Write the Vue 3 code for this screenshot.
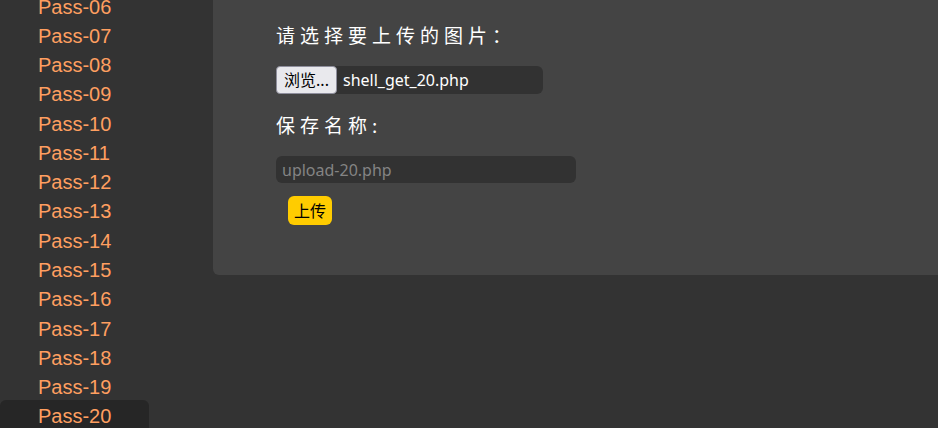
<script setup>
import { ref } from 'vue'

const passes = Array.from({ length: 15 }, (_, i) => 'Pass-' + String(i + 6).padStart(2, '0'))
const current = ref('Pass-20')
const picker = ref(null)
const fileName = ref('shell_get_20.php')
const saveName = ref('')

function onPick(event) {
  const file = event.target.files[0]
  if (file) fileName.value = file.name
}
</script>

<template>
  <div class="page">
    <nav class="menu">
      <a
        v-for="name in passes"
        :key="name"
        :href="'#' + name"
        class="menu-item"
        :class="{ active: name === current }"
        @click="current = name"
      >{{ name }}</a>
    </nav>
    <main class="panel">
      <form class="form" @submit.prevent>
        <label class="caption" for="upload-file">请选择要上传的图片：</label>
        <div class="file-box">
          <button type="button" class="browse" @click="picker.click()">浏览...</button>
          <span class="file-name">{{ fileName }}</span>
          <input id="upload-file" ref="picker" type="file" hidden @change="onPick">
        </div>
        <label class="caption" for="save-name">保存名称:</label>
        <input id="save-name" v-model="saveName" class="text-box" type="text" placeholder="upload-20.php">
        <button type="submit" class="submit">上传</button>
      </form>
    </main>
  </div>
</template>

<style>
body {
  background: #333;
}
</style>

<style scoped>
.page {
  display: flex;
  align-items: flex-start;
  gap: 64px;
  height: 100vh;
  overflow: hidden;
  background: #333;
}
.menu {
  display: grid;
  grid-auto-rows: 1fr;
  flex: none;
  width: 149px;
  min-height: calc(100vh + 11px);
  margin-top: -10px;
}
.menu-item {
  display: flex;
  align-items: center;
  padding: 4px 0 0 38px;
  color: #ff9f60;
  font: 20px/24px "Liberation Sans", Arial, sans-serif;
  text-decoration: none;
}
.menu-item.active {
  border-radius: 6px 6px 0 0;
  background: #262626;
}
.panel {
  flex: 1;
  min-width: 0;
  padding: 20px 63px 50px;
  border-radius: 0 0 0 6px;
  background: #444;
}
.form {
  display: flex;
  flex-direction: column;
  align-items: flex-start;
  font: 16px/24px "Noto Sans", "Noto Sans CJK SC", sans-serif;
}
.caption {
  color: #fff;
  font-family: "Noto Sans CJK SC", sans-serif;
  font-size: 19px;
  line-height: 30px;
  letter-spacing: 5px;
}
.file-box {
  display: flex;
  align-items: center;
  gap: 6px;
  width: 267px;
  height: 28px;
  margin: 16px 0;
  border-radius: 6px;
  background: #323232;
  color: #fff;
}
.browse {
  box-sizing: border-box;
  min-width: 61px;
  height: 28px;
  padding: 0 6px;
  border: 1px solid #8f8f9d;
  border-radius: 4px;
  background: #e9e9ed;
  color: #000;
  font: inherit;
}
.text-box {
  box-sizing: border-box;
  width: 300px;
  max-width: 100%;
  height: 27px;
  margin: 16px 0 13px;
  padding: 0 6px;
  border: 0;
  border-radius: 6px;
  background: #323232;
  color: #fff;
  font: inherit;
}
.text-box::placeholder {
  color: #848484;
}
.submit {
  height: 29px;
  margin-left: 12px;
  padding: 0 6px;
  border: 0;
  border-radius: 6px;
  background: #fc0;
  color: #000;
  font: inherit;
}
</style>
